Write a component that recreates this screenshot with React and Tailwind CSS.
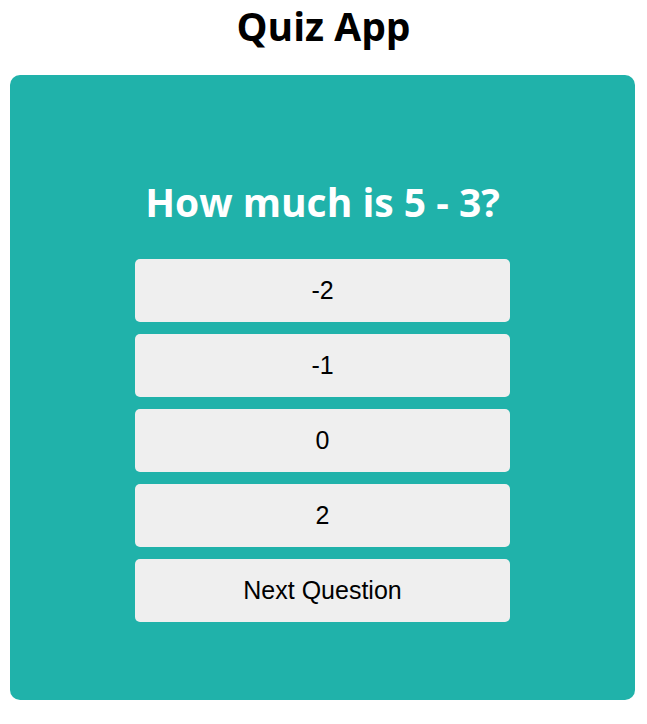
import React, { useState } from 'react';

const questions = [
  { text: 'How much is 5 - 3?', answers: ['-2', '-1', '0', '2'] },
];

export default function App() {
  const [current] = useState(0);
  const q = questions[current];

  return (
    <div className="w-[647px] min-h-[724px] bg-white" style={{ fontFamily: '"Liberation Sans", Arial, sans-serif' }}>
      <h1 className="pt-[4px] h-[75px] text-center text-[39px] font-bold text-black leading-[44px] font-['Open_Sans',sans-serif]">
        Quiz App
      </h1>
      <div className="ml-[10px] w-[625px] h-[625px] rounded-[10px] bg-[#20b2aa] flex flex-col items-center pt-[100px]">
        <h2 className="text-white text-[39px] font-bold leading-[54px] mb-[30px] font-['Open_Sans',sans-serif]">
          {q.text}
        </h2>
        <div className="flex flex-col gap-[12px]">
          {[...q.answers, 'Next Question'].map((a) => (
            <button
              key={a}
              className="w-[375px] h-[63px] rounded-[5px] bg-[#efefef] text-black text-[25px] font-['Liberation_Sans',Arial,sans-serif]"
            >
              {a}
            </button>
          ))}
        </div>
      </div>
    </div>
  );
}
